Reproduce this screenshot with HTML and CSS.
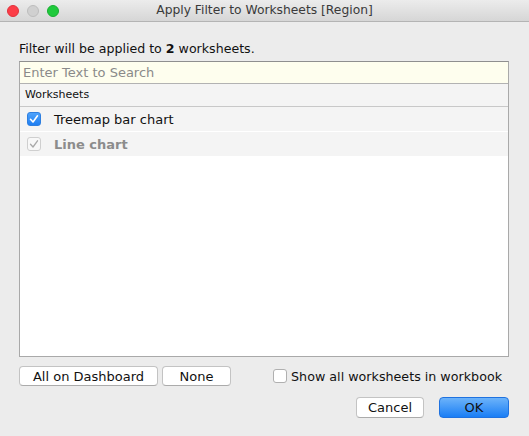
FILE: index.html
```html
<!DOCTYPE html>
<html>
<head>
<meta charset="utf-8">
<link rel="stylesheet" href="styles.css">
</head>
<body>
<div class="window">
  <div class="titlebar">
    <div class="lights">
      <span class="light red"></span>
      <span class="light gray"></span>
      <span class="light green"></span>
    </div>
    <div class="title">Apply Filter to Worksheets [Region]</div>
  </div>
  <div class="content">
    <div class="msg">Filter will be applied to <b>2</b> worksheets.</div>
    <div class="list">
      <div class="search">Enter Text to Search</div>
      <div class="header">Worksheets</div>
      <div class="row">
        <span class="cb checked"><svg viewBox="0 0 14 14" width="14" height="14"><path d="M3.5 7.3 L6 10 L10.5 3.8" fill="none" stroke="#fff" stroke-width="1.6" stroke-linecap="round" stroke-linejoin="round"/></svg></span>
        <span class="label">Treemap bar chart</span>
      </div>
      <div class="row disabled">
        <span class="cb dim"><svg viewBox="0 0 14 14" width="14" height="14"><path d="M3.5 7.3 L6 10 L10.5 3.8" fill="none" stroke="#a9a9a9" stroke-width="1.3" stroke-linecap="round" stroke-linejoin="round"/></svg></span>
        <span class="label">Line chart</span>
      </div>
    </div>
    <div class="controls">
      <button class="btn wide">All on Dashboard</button>
      <button class="btn none">None</button>
      <label class="showall"><span class="cb empty"></span>Show all worksheets in workbook</label>
    </div>
    <div class="actions">
      <button class="btn cancel">Cancel</button>
      <button class="btn ok">OK</button>
    </div>
  </div>
</div>
</body>
</html>
```
FILE: styles.css
```css
html, body {
  margin: 0;
  padding: 0;
}
body {
  width: 529px;
  height: 436px;
  background: #ececec;
  font-family: "DejaVu Sans", "Liberation Sans", sans-serif;
  color: #111;
  overflow: hidden;
}
.window {
  width: 529px;
  height: 436px;
  display: flex;
  flex-direction: column;
}
.titlebar {
  height: 21px;
  border-bottom: 1px solid #b4b4b4;
  background: linear-gradient(#ececec, #d6d6d6);
  display: flex;
  align-items: center;
  position: relative;
}
.lights {
  display: flex;
  gap: 8px;
  padding-left: 7px;
}
.light {
  width: 12px;
  height: 12px;
  border-radius: 50%;
  box-sizing: border-box;
}
.red { background: #fc3d47; border: 1px solid #e0323c; }
.gray { background: #d0d0d0; border: 1px solid #bdbdbd; }
.green { background: #1fca3c; border: 1px solid #18ae31; }
.title {
  position: absolute;
  left: 0;
  right: 0;
  top: 3px;
  text-align: center;
  font-size: 12.3px;
  color: #3a3a3a;
}
.content {
  padding: 19px 20px 0 19px;
  display: flex;
  flex-direction: column;
}
.msg {
  font-size: 12.6px;
  line-height: 16px;
  height: 18px;
  color: #111;
}
.msg b { font-weight: bold; }
.list {
  margin-top: 2px;
  height: 294px;
  border: 1px solid #a9a9a9;
  border-top-color: #8f8f8f;
  background: #fff;
  display: flex;
  flex-direction: column;
}
.search {
  height: 21px;
  line-height: 21px;
  background: #fefeee;
  border-bottom: 1px solid #b2b2b2;
  color: #8a8a8a;
  font-size: 13px;
  padding-left: 3px;
}
.header {
  height: 22px;
  line-height: 22px;
  background: #f4f4f4;
  border-bottom: 1px solid #c8c8c8;
  font-size: 11px;
  padding-left: 5px;
  color: #111;
}
.row {
  height: 24px;
  background: #f4f4f4;
  border-bottom: 1px solid #fff;
  display: flex;
  align-items: center;
  padding-left: 7px;
}
.cb {
  width: 14px;
  height: 14px;
  box-sizing: border-box;
  border-radius: 3px;
  display: inline-flex;
  flex: none;
}
.cb.checked {
  background: linear-gradient(#4ea2fb, #1f7ff2);
  border: 1px solid #2e7fe0;
}
.cb.checked svg, .cb.dim svg { margin: -1px; }
.cb.dim {
  background: #f8f8f8;
  border: 1px solid #cfcfcf;
}
.cb.empty {
  background: #fff;
  border: 1px solid #b0b0b0;
}
.label {
  margin-left: 13px;
  font-size: 13px;
  color: #111;
}
.disabled .label {
  color: #8c8c8c;
  font-weight: bold;
}
.controls {
  margin-top: 9px;
  display: flex;
  align-items: center;
}
.btn {
  font-family: "DejaVu Sans", "Liberation Sans", sans-serif;
  font-size: 13px;
  height: 20px;
  padding: 0;
  background: #fff;
  border: 1px solid #c3c3c3;
  border-bottom-color: #ababab;
  border-radius: 4px;
  color: #111;
}
.wide { width: 139px; }
.none { width: 69px; margin-left: 4px; }
.showall {
  margin-left: auto;
  margin-right: 7px;
  display: flex;
  align-items: center;
  font-size: 12.7px;
  color: #111;
}
.showall .cb { margin-right: 4px; }
.actions {
  margin-top: 11px;
  display: flex;
  justify-content: flex-end;
  gap: 15px;
}
.cancel { width: 68px; height: 21px; }
.ok {
  width: 70px;
  height: 21px;
  background: linear-gradient(#6cb3fa, #1a7ef5);
  border: 1px solid #1f72e0;
  color: #111;
}
```
